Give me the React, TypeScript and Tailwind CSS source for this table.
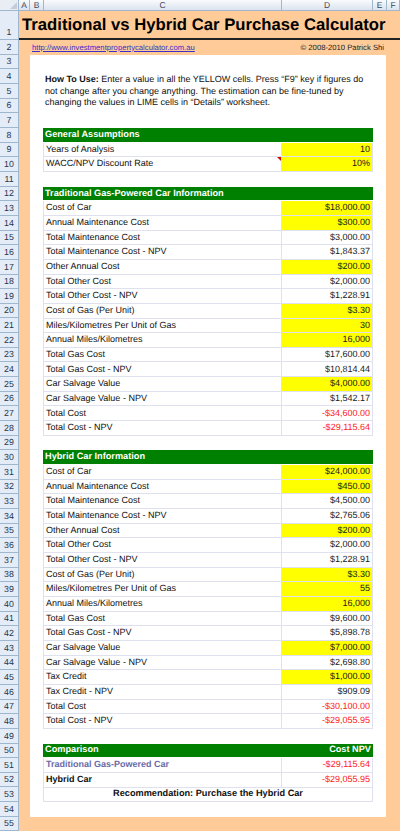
import React from "react";

const font = { fontFamily: '"Liberation Sans", Arial, sans-serif' };

type Line = {
  label?: string;
  value?: string;
  yellow?: boolean;
  red?: boolean;
  comment?: boolean;
  labelClass?: string;
};

function Blank() {
  return <div className="h-[14.667px]" />;
}

function Head({ title, right }: { title: string; right?: string }) {
  return (
    <div className="flex h-[14.667px]">
      <div className="w-[13px] shrink-0" />
      <div className="flex w-[330px] items-center justify-between border-b border-white bg-[#008000] pl-[2px] pr-[2px] text-[9.2px] font-bold text-white">
        <span>{title}</span>
        {right && <span>{right}</span>}
      </div>
    </div>
  );
}

function Row({ label, value, yellow, red, comment, labelClass }: Line) {
  return (
    <div className="flex h-[14.667px] text-[9px]">
      <div className="w-[13px] shrink-0" />
      <div
        className={`relative flex w-[239px] items-center border-b border-l border-r border-[#dfe1ee] pl-[2px] ${labelClass ?? "text-[#111]"}`}
      >
        {label}
        {comment && (
          <span className="absolute right-0 top-0 h-0 w-0 border-l-[4px] border-t-[4px] border-l-transparent border-t-[#e00000]" />
        )}
      </div>
      <div
        className={`flex w-[91px] items-center justify-end border-b border-r border-[#dfe1ee] pr-[2px] ${
          yellow ? "bg-[#ffff00]" : ""
        } ${red ? "text-[#ff1a1a]" : "text-[#1a1a1a]"}`}
      >
        {value}
      </div>
    </div>
  );
}

const general: Line[] = [
  { label: "Years of Analysis", value: "10", yellow: true },
  { label: "WACC/NPV Discount Rate", value: "10%", yellow: true, comment: true },
];

const traditional: Line[] = [
  { label: "Cost of Car", value: "$18,000.00", yellow: true },
  { label: "Annual Maintenance Cost", value: "$300.00", yellow: true },
  { label: "Total Maintenance Cost", value: "$3,000.00" },
  { label: "Total Maintenance Cost - NPV", value: "$1,843.37" },
  { label: "Other Annual Cost", value: "$200.00", yellow: true },
  { label: "Total Other Cost", value: "$2,000.00" },
  { label: "Total Other Cost - NPV", value: "$1,228.91" },
  { label: "Cost of Gas (Per Unit)", value: "$3.30", yellow: true },
  { label: "Miles/Kilometres Per Unit of Gas", value: "30", yellow: true },
  { label: "Annual Miles/Kilometres", value: "16,000", yellow: true },
  { label: "Total Gas Cost", value: "$17,600.00" },
  { label: "Total Gas Cost - NPV", value: "$10,814.44" },
  { label: "Car Salvage Value", value: "$4,000.00", yellow: true },
  { label: "Car Salvage Value - NPV", value: "$1,542.17" },
  { label: "Total Cost", value: "-$34,600.00", red: true },
  { label: "Total Cost - NPV", value: "-$29,115.64", red: true },
];

const hybrid: Line[] = [
  { label: "Cost of Car", value: "$24,000.00", yellow: true },
  { label: "Annual Maintenance Cost", value: "$450.00", yellow: true },
  { label: "Total Maintenance Cost", value: "$4,500.00" },
  { label: "Total Maintenance Cost - NPV", value: "$2,765.06" },
  { label: "Other Annual Cost", value: "$200.00", yellow: true },
  { label: "Total Other Cost", value: "$2,000.00" },
  { label: "Total Other Cost - NPV", value: "$1,228.91" },
  { label: "Cost of Gas (Per Unit)", value: "$3.30", yellow: true },
  { label: "Miles/Kilometres Per Unit of Gas", value: "55", yellow: true },
  { label: "Annual Miles/Kilometres", value: "16,000", yellow: true },
  { label: "Total Gas Cost", value: "$9,600.00" },
  { label: "Total Gas Cost - NPV", value: "$5,898.78" },
  { label: "Car Salvage Value", value: "$7,000.00", yellow: true },
  { label: "Car Salvage Value - NPV", value: "$2,698.80" },
  { label: "Tax Credit", value: "$1,000.00", yellow: true },
  { label: "Tax Credit - NPV", value: "$909.09" },
  { label: "Total Cost", value: "-$30,100.00", red: true },
  { label: "Total Cost - NPV", value: "-$29,055.95", red: true },
];

const columns = [
  { name: "A", w: "w-[11px]" },
  { name: "B", w: "w-[14px]" },
  { name: "C", w: "w-[238px]" },
  { name: "D", w: "w-[91px]" },
  { name: "E", w: "w-[14px]" },
  { name: "F", w: "flex-1" },
];

export default function App() {
  return (
    <div
      className="h-[832px] w-[400px] overflow-hidden bg-white [text-rendering:geometricPrecision]"
      style={font}
    >
      {/* column letters */}
      <div className="flex h-[11px]">
        <div className="relative w-[19px] shrink-0 border-b border-r border-[#9eb6ce] bg-[#e9eef5]">
          <span className="absolute bottom-[1px] right-[1px] h-0 w-0 border-b-[7px] border-l-[7px] border-b-[#c3cdd9] border-l-transparent" />
        </div>
        {columns.map((c) => (
          <div
            key={c.name}
            className={`${c.w} flex shrink-0 items-center justify-center border-b border-r border-[#9eb6ce] bg-gradient-to-b from-[#f9fbfd] to-[#dbe3ee] text-[8.5px] leading-none text-[#3b4556]`}
          >
            {c.name}
          </div>
        ))}
      </div>

      <div className="flex">
        {/* row numbers */}
        <div className="w-[19px] shrink-0 border-r border-[#9eb6ce] bg-[#e4ecf7]">
          {Array.from({ length: 55 }, (_, i) => i + 1).map((n) => (
            <div
              key={n}
              className={`${
                n === 1 ? "h-[29px]" : "h-[14.667px]"
              } flex items-end justify-center border-b border-[#9eb6ce] pb-[1px] text-[8.8px] leading-[12px] text-[#27364f]`}
            >
              {n}
            </div>
          ))}
        </div>

        {/* sheet */}
        <div className="w-[381px] bg-[#ffcc99]">
          <div className="flex h-[29px] items-center border-b-2 border-[#222] pl-[3px] pt-[1px] text-[16.7px] font-bold text-black">
            Traditional vs Hybrid Car Purchase Calculator
          </div>
          <div className="flex h-[14.667px] items-center justify-between pl-[13px] pr-[16px] text-[7.7px]">
            <span className="text-[#3d30c9] underline">http://www.investmentpropertycalculator.com.au</span>
            <span className="text-[#222]">© 2008-2010 Patrick Shi</span>
          </div>

          <div className="pl-[11px] pr-[14px]">
            <div className="bg-white">
              <Blank />
              <div className="flex h-[44px] flex-col justify-center pl-[15px] text-[9px] leading-[11.5px] text-[#111] whitespace-nowrap">
                <div>
                  <b>How To Use:</b> Enter a value in all the YELLOW cells. Press “F9” key if figures do
                </div>
                <div>not change after you change anything. The estimation can be fine-tuned by</div>
                <div>changing the values in LIME cells in “Details” worksheet.</div>
              </div>
              <Blank />
              <Head title="General Assumptions" />
              {general.map((l) => (
                <Row key={l.label} {...l} />
              ))}
              <Blank />
              <Head title="Traditional Gas-Powered Car Information" />
              {traditional.map((l) => (
                <Row key={l.label} {...l} />
              ))}
              <Blank />
              <Head title="Hybrid Car Information" />
              {hybrid.map((l) => (
                <Row key={l.label} {...l} />
              ))}
              <Blank />
              <Head title="Comparison" right="Cost NPV" />
              <Row
                label="Traditional Gas-Powered Car"
                value="-$29,115.64"
                red
                labelClass="font-bold text-[#6a6aa6]"
              />
              <Row label="Hybrid Car" value="-$29,055.95" red labelClass="font-bold text-[#111]" />
              <div className="flex h-[14.667px]">
                <div className="w-[13px] shrink-0" />
                <div className="flex w-[330px] items-center justify-center border-b border-l border-r border-[#dfe1ee] text-[9.2px] font-bold text-[#111]">
                  Recommendation: Purchase the Hybrid Car
                </div>
              </div>
              <Blank />
            </div>
          </div>
          <Blank />
        </div>
      </div>
    </div>
  );
}
